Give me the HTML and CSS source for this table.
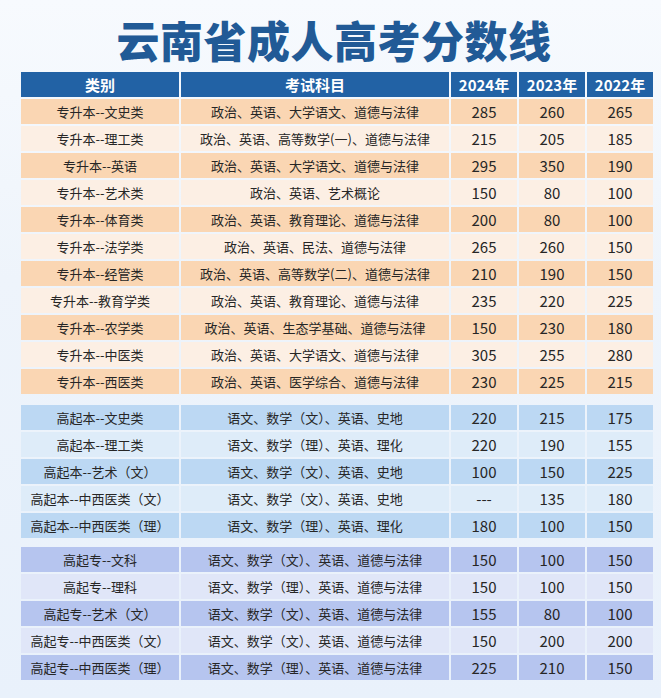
FILE: index.html
```html
<!DOCTYPE html>
<html lang="zh">
<head>
<meta charset="utf-8">
<link rel="stylesheet" href="styles.css">
</head>
<body>
<div class="page">
  <h1 class="title">云南省成人高考分数线</h1>
  <table class="scores">
    <colgroup>
      <col class="c1"><col class="c2"><col class="c3"><col class="c4"><col class="c5">
    </colgroup>
    <thead>
      <tr><th>类别</th><th>考试科目</th><th>2024年</th><th>2023年</th><th>2022年</th></tr>
    </thead>
    <tbody class="zsb">
      <tr class="a"><td>专升本--文史类</td><td>政治、英语、大学语文、道德与法律</td><td class="n">285</td><td class="n">260</td><td class="n">265</td></tr>
      <tr class="b"><td>专升本--理工类</td><td>政治、英语、高等数学(一)、道德与法律</td><td class="n">215</td><td class="n">205</td><td class="n">185</td></tr>
      <tr class="a"><td>专升本--英语</td><td>政治、英语、大学语文、道德与法律</td><td class="n">295</td><td class="n">350</td><td class="n">190</td></tr>
      <tr class="b"><td>专升本--艺术类</td><td>政治、英语、艺术概论</td><td class="n">150</td><td class="n">80</td><td class="n">100</td></tr>
      <tr class="a"><td>专升本--体育类</td><td>政治、英语、教育理论、道德与法律</td><td class="n">200</td><td class="n">80</td><td class="n">100</td></tr>
      <tr class="b"><td>专升本--法学类</td><td>政治、英语、民法、道德与法律</td><td class="n">265</td><td class="n">260</td><td class="n">150</td></tr>
      <tr class="a"><td>专升本--经管类</td><td>政治、英语、高等数学(二)、道德与法律</td><td class="n">210</td><td class="n">190</td><td class="n">150</td></tr>
      <tr class="b"><td>专升本--教育学类</td><td>政治、英语、教育理论、道德与法律</td><td class="n">235</td><td class="n">220</td><td class="n">225</td></tr>
      <tr class="a"><td>专升本--农学类</td><td>政治、英语、生态学基础、道德与法律</td><td class="n">150</td><td class="n">230</td><td class="n">180</td></tr>
      <tr class="b"><td>专升本--中医类</td><td>政治、英语、大学语文、道德与法律</td><td class="n">305</td><td class="n">255</td><td class="n">280</td></tr>
      <tr class="a"><td>专升本--西医类</td><td>政治、英语、医学综合、道德与法律</td><td class="n">230</td><td class="n">225</td><td class="n">215</td></tr>
    </tbody>
    <tbody class="gqb">
      <tr class="gap gap1"><td colspan="5"></td></tr>
      <tr class="a"><td>高起本--文史类</td><td>语文、数学（文）、英语、史地</td><td class="n">220</td><td class="n">215</td><td class="n">175</td></tr>
      <tr class="b"><td>高起本--理工类</td><td>语文、数学（理）、英语、理化</td><td class="n">220</td><td class="n">190</td><td class="n">155</td></tr>
      <tr class="a"><td>高起本--艺术（文）</td><td>语文、数学（文）、英语、史地</td><td class="n">100</td><td class="n">150</td><td class="n">225</td></tr>
      <tr class="b"><td>高起本--中西医类（文）</td><td>语文、数学（文）、英语、史地</td><td class="n">---</td><td class="n">135</td><td class="n">180</td></tr>
      <tr class="a"><td>高起本--中西医类（理）</td><td>语文、数学（理）、英语、理化</td><td class="n">180</td><td class="n">100</td><td class="n">150</td></tr>
    </tbody>
    <tbody class="gqz">
      <tr class="gap gap2"><td colspan="5"></td></tr>
      <tr class="a"><td>高起专--文科</td><td>语文、数学（文）、英语、道德与法律</td><td class="n">150</td><td class="n">100</td><td class="n">150</td></tr>
      <tr class="b"><td>高起专--理科</td><td>语文、数学（理）、英语、道德与法律</td><td class="n">150</td><td class="n">100</td><td class="n">150</td></tr>
      <tr class="a"><td>高起专--艺术（文）</td><td>语文、数学（文）、英语、道德与法律</td><td class="n">155</td><td class="n">80</td><td class="n">100</td></tr>
      <tr class="b"><td>高起专--中西医类（文）</td><td>语文、数学（文）、英语、道德与法律</td><td class="n">150</td><td class="n">200</td><td class="n">200</td></tr>
      <tr class="a"><td>高起专--中西医类（理）</td><td>语文、数学（理）、英语、道德与法律</td><td class="n">225</td><td class="n">210</td><td class="n">150</td></tr>
    </tbody>
  </table>
</div>
</body>
</html>
```

FILE: styles.css
```css
html, body {
  margin: 0;
  padding: 0;
}
body {
  width: 661px;
  height: 698px;
  overflow: hidden;
  background: linear-gradient(180deg, #f7fafe 0%, #eef4fb 40%, #e9f1fb 100%);
  font-family: "Noto Sans CJK SC", "Noto Sans", sans-serif;
  color: #262626;
}
.page {
  padding: 0 8px 0 19px;
}
.title {
  margin: 0;
  height: 70px;
  line-height: 78px;
  text-align: center;
  font-size: 43px;
  font-weight: 900;
  color: #215a96;
  letter-spacing: 0.5px;
  padding-right: 4px;
}
.scores {
  border-collapse: separate;
  border-spacing: 2px;
  table-layout: fixed;
  width: 636px;
  margin-top: 0;
}
.c1 { width: 158px; }
.c2 { width: 268px; }
.c3 { width: 66px; }
.c4 { width: 66px; }
.c5 { width: 66px; }
.scores th {
  background: #2262a5;
  color: #fff;
  font-size: 15px;
  font-weight: 700;
  height: 25px;
  padding: 0;
  text-align: center;
}
.scores td {
  text-align: center;
  font-size: 13px;
  padding: 0;
  white-space: nowrap;
}
.scores td.n {
  font-size: 15px;
}
.zsb tr { height: 25px; }
.zsb tr.a td { background: #fad6b3; }
.zsb tr.b td { background: #fcefe4; }
.gqb tr, .gqz tr { height: 25px; }
.gqb tr.a td { background: #bcd8f3; }
.gqb tr.b td { background: #deecf9; }
.gqz tr.a td { background: #b6c5ef; }
.gqz tr.b td { background: #e0e6f8; }
.scores tr.gap td { background: transparent; }
.scores tr.gap1 { height: 7px; }
.scores tr.gap2 { height: 5px; }
```
